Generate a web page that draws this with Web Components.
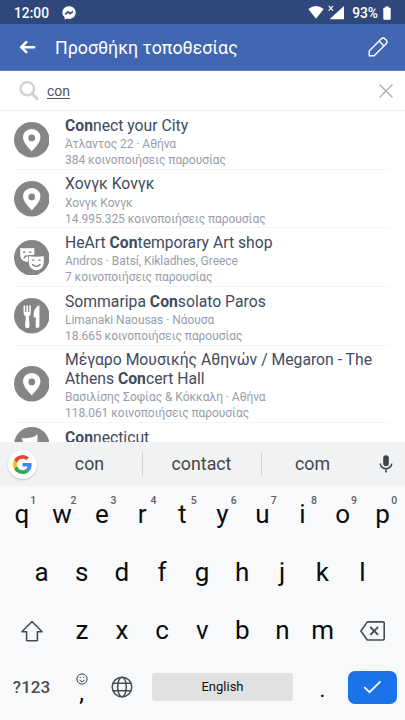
<!DOCTYPE html>
<html lang="el">
<head>
<meta charset="utf-8">
<title>Προσθήκη τοποθεσίας</title>
<style>
html,body{margin:0;height:100%;overflow:hidden;background:#fff}
body{font-family:Roboto,"Noto Sans",sans-serif}
</style>
</head>
<body>
<checkin-screen></checkin-screen>
<script>
const define = (name, html, setup) => {
  const tpl = document.createElement('template');
  tpl.innerHTML = html;
  customElements.define(name, class extends HTMLElement {
    constructor() {
      super();
      this.attachShadow({mode: 'open'}).append(tpl.content.cloneNode(true));
    }
    connectedCallback() { if (setup) setup(this, this.shadowRoot); }
  });
};

const glyphs = {
  pin: '<path fill="#fff" fill-rule="evenodd" d="M18 7.200c-5 0-8.800 3.700-8.800 8.300c0 5.400 5.200 9.900 8.800 14.500c3.600-4.600 8.800-9.100 8.800-14.500c0-4.600-3.800-8.300-8.800-8.300zM18 12.700a3.400 3.400 0 1 1 0 6.800a3.400 3.400 0 0 1 0-6.800z"/>',
  masks: '<path fill="#fff" d="M6.300 8q7.200.8 14.300 0v7.300h-6.400l.2 6.600q-1 .4-2.500.2q-5.600-1.500-5.600-6.800z"/><path fill="#fff" d="M15 16.600q7.600.8 15.200 0v7q-.8 6.800-7.500 7q-7-.2-7.700-7z"/><g fill="none" stroke="#777" stroke-width="1.300" stroke-linecap="round"><path d="M9.600 12.300h1.500M15.700 12.300h1.500M10.200 18.200q1.200-2.200 3-2M18.800 20.400h1.300M25.200 20.400h1.300M18.800 24.800q3.800 3.800 7.600 0"/></g>',
  food: '<path fill="#fff" d="M9.700 7.500h1.600v6.800h1.200V7.500h1.700v6.800h1.200V7.500H17v7.700q0 2.300-1.900 3.300l.7 10.200q-.2 2-2.300 2t-2.300-2l.7-10.200q-2.200-1-2.200-3.300zM25.800 7v21.500q0 2-2 2t-1.900-2l.3-8.600h-2.300q-.6-10.200 5.900-12.900z"/>',
  place: '<path fill="#fff" d="M7.500 11.200q9 .8 14.800-2V7.500h1.500v27h-1.500v-14H9.800q.2-5-2.300-9.300z"/>'
};

define('status-bar', `
<style>
:host{display:flex;align-items:center;height:24px;background:#2f477a;color:#fff;font:500 13.800px/24px Roboto,sans-serif;padding:1px 14px 0 14px;box-sizing:border-box}
.msg{margin-left:12.500px}
.end{margin-left:auto;display:flex;align-items:center}
.pct{margin:0 5px 0 7px;font-size:13.800px}
svg{display:block}
</style>
<span>12:00</span>
<svg class="msg" width="14" height="14" viewBox="0 0 14 14"><path fill="#fff" d="M7 .3C3.200.3.400 3 .400 6.600c0 2 .9 3.600 2.300 4.800v2.300l2.100-1.100c4.900 1.300 8.900-1.700 8.900-6C13.700 3 10.800.3 7 .3z"/><path fill="none" stroke="#2f477a" stroke-width="1.600" d="M3.200 8.400l2.800-2.600 2.100 1.900 2.800-2.400"/></svg>
<div class="end">
<svg width="16" height="13" viewBox="0 0 16 13"><path fill="#fff" d="M.3 2.900Q8-2.700 15.700 2.900L8 12.700z"/></svg>
<svg width="18" height="15" viewBox="0 0 18 15" style="margin-left:3px"><path fill="#fff" d="M17 1v13.300H2.500z"/><path stroke="#2f477a" stroke-width="3" d="M1 0l6.500 7"/><path stroke="#fff" stroke-width="1.100" d="M1.700.8l4.300 4.800M6 .8L1.700 5.600"/></svg>
<span class="pct">93%</span>
<svg width="8" height="14" viewBox="0 0 8 14"><path fill="#fff" d="M2.200.4h3.600v1.300h1q.9 0 .9.900v10.200q0 .9-.9.900H1.200q-.9 0-.9-.9V2.600q0-.9.900-.9h1z"/></svg>
</div>`);

define('app-bar', `
<style>
:host{display:flex;align-items:center;height:47px;background:#4267b2;border-bottom:1px solid #5e7cbd;box-sizing:border-box;color:#fff;padding:0 16px 0 19px}
h1{font:400 17.800px/24px Roboto,sans-serif;margin:2px 0 0 19px;flex:1;white-space:nowrap}
svg{display:block}
</style>
<svg width="17" height="16" viewBox="0 0 17 16" fill="none" stroke="#fff" stroke-width="2.500" stroke-linecap="round" stroke-linejoin="round"><path d="M15 8.200H3"/><path d="M7.300 3.200L2.200 8.200l5.100 5"/></svg>
<h1><slot></slot></h1>
<svg width="22" height="22" viewBox="0 0 22 22" fill="none" stroke="#fff" stroke-width="1.400" stroke-linejoin="round"><path d="M2.200 19.800V14.900L14.300 2.800q1.900-1.500 3.700.1l1.200 1.200q1.500 1.800 0 3.600L7.100 19.800zM12.100 5l4.900 4.900"/></svg>`);

define('search-field', `
<style>
:host{display:flex;align-items:center;height:40px;box-sizing:border-box;border-bottom:1px solid #ededee;padding:0 11px 0 19px;background:#fff}
span{flex:1;margin:1px 0 0 8px;font:400 14px/20px Roboto,sans-serif;color:#4b5567}
u{text-underline-offset:2px;text-decoration-thickness:1px}
svg{display:block}
</style>
<svg width="20" height="21" viewBox="0 0 20 21" fill="none" stroke="#ced1d6"><circle cx="8.300" cy="8.700" r="6.700" stroke-width="2.300"/><path stroke-width="3" stroke-linecap="round" d="M13.500 14l4.500 4.700"/></svg>
<span><u><slot></slot></u></span>
<svg width="16" height="16" viewBox="0 0 16 16" stroke="#a2a8b5" stroke-width="1.200"><path d="M1.500 1.500l13 13M14.500 1.500l-13 13"/></svg>`);

define('place-row', `
<style>
:host{display:flex;align-items:center;position:relative;box-sizing:border-box;padding:5.500px 13px 1.700px 13.500px;background:linear-gradient(#f5f6f7,#f5f6f7) 16px 100%/373px 1px no-repeat}
:host(:last-child){padding-top:6.500px}
svg{flex:none;display:block;width:35.500px;height:35.500px;margin-top:-4.200px}
.text{margin-left:16px;flex:1;min-width:0}
.title{font:400 15.730px/18.500px Roboto,sans-serif;color:#414b5e;margin-bottom:1px;white-space:nowrap}
::slotted(p){margin:0;font:400 12px/16px Roboto,sans-serif;letter-spacing:-.05px;color:#979dac;white-space:nowrap}
</style>
<svg viewBox="0 0 36 36"><circle cx="18" cy="18" r="18" fill="#858585"/><g></g></svg>
<div class="text"><div class="title"><slot name="title"></slot></div><slot></slot></div>`,
(el, root) => { root.querySelector('g').innerHTML = glyphs[el.getAttribute('icon')]; });

define('suggestion-bar', `
<style>
:host{display:flex;align-items:center;height:44px;background:#f0f2f3;box-sizing:border-box;padding:0 12.500px 0 8px}
.logo{width:29px;height:29px;border-radius:50%;background:#fff;box-shadow:0 1px 2px #0003;display:grid;place-items:center}
.words{flex:1;display:grid;grid-template-columns:105px 119px 103px;height:24px}
.words span{display:grid;place-items:center;font:400 17.800px/24px Roboto,sans-serif;color:#434749}
.words span+span{border-left:1px solid #cfd1d3;padding-right:1px}
svg{display:block}
</style>
<div class="logo"><svg width="19" height="19" viewBox="0 0 48 48"><path fill="#ea4335" d="M24 9.500c3.540 0 6.710 1.220 9.210 3.600l6.850-6.850C35.900 2.380 30.470 0 24 0 14.620 0 6.510 5.380 2.560 13.220l7.980 6.190C12.430 13.720 17.740 9.500 24 9.500z"/><path fill="#4285f4" d="M46.980 24.550c0-1.570-.15-3.090-.38-4.550H24v9.020h12.940c-.58 2.960-2.260 5.480-4.780 7.180l7.730 6c4.510-4.180 7.090-10.360 7.090-17.650z"/><path fill="#fbbc05" d="M10.530 28.590c-.48-1.450-.76-2.990-.76-4.590s.27-3.140.76-4.590l-7.980-6.190C.92 16.460 0 20.120 0 24c0 3.880.92 7.540 2.560 10.780z"/><path fill="#34a853" d="M24 48c6.480 0 11.930-2.130 15.890-5.810l-7.730-6c-2.150 1.450-4.920 2.300-8.160 2.300-6.260 0-11.570-4.220-13.470-9.910l-7.980 6.190C6.510 42.620 14.620 48 24 48z"/></svg></div>
<div class="words"><span>con</span><span>contact</span><span>com</span></div>
<svg width="14" height="18" viewBox="0 0 14 18"><rect x="4.200" y=".3" width="5.600" height="11" rx="2.800" fill="#404446"/><path fill="none" stroke="#404446" stroke-width="1.500" d="M1.300 8.500a5.700 5.200 0 0 0 11.400 0M7 13.500v4"/></svg>`);

define('letter-key', `
<style>
:host{display:grid;place-items:center;position:relative;width:40.100px;height:58px;font:400 26px/30px Roboto,sans-serif;color:#0b0c0d}
sup{position:absolute;left:31.500px;top:9px;font:500 10.500px/12px Roboto,sans-serif;color:#5c6063;transform:translateX(-50%)}
.cap{margin-top:-2px}
</style>
<span class="cap"><slot></slot></span>`,
(el, root) => {
  if (el.hasAttribute('hint')) {
    const s = document.createElement('sup');
    s.textContent = el.getAttribute('hint');
    root.append(s);
  }
});

define('key-board', `
<style>
:host{display:block;height:234px;background:#f8f9fb}
.row{display:flex;justify-content:center;height:58px;align-items:center}
.row.mid{padding-right:1px}
.first{padding-right:.5px}
.third{padding-right:.5px}
.fn{display:grid;place-items:center;width:60.300px;height:58px}
.bottom{display:grid;grid-template-columns:63px 37px 43px 9px 141px 55px 49px;justify-content:start;height:54px}
.bottom>*{justify-self:center}
.sym{font:500 17px/20px Roboto,sans-serif;color:#484c4f}
.comma{display:flex;flex-direction:column;align-items:center;font:400 24px/16px Roboto,sans-serif}
.space{width:141px;height:28px;border-radius:3px;background:#e0e2e1;display:grid;place-items:center;font:400 13px/16px Roboto,sans-serif;color:#111}
.dot{font:400 22px/26px Roboto,sans-serif;padding:5px 0 0 4px}
.enter{width:49px;height:33px;border-radius:7px;background:#1a73e8;display:grid;place-items:center}
svg{display:block}
</style>
<div class="row first"></div>
<div class="row mid"></div>
<div class="row third">
<div class="fn"><svg width="22" height="22" viewBox="0 0 22 22" fill="none" stroke="#484c4f" stroke-width="1.600" stroke-linejoin="round"><path d="M11 1.500L.9 11.700h4.700V20q0 .7.700.7h9.400q.7 0 .7-.7V11.700h4.700z"/></svg></div>
<div class="fn del"><svg width="25" height="20" viewBox="0 0 25 20" fill="none" stroke="#484c4f" stroke-width="1.600" stroke-linejoin="round"><path d="M7.300.9H23q1.200 0 1.200 1.200v15.700q0 1.200-1.200 1.200H7.300L.9 10z"/><path stroke-width="1.800" d="M10.300 6l7.800 7.800M18.100 6l-7.800 7.800"/></svg></div>
</div>
<div class="row bottom">
<span class="sym">?123</span>
<span class="comma"><svg width="12" height="12" viewBox="0 0 12 12" fill="none" stroke="#404446"><circle cx="6" cy="6" r="5.100"/><path d="M3.500 7.200q2.500 3 5 0M3.700 4.400h1.100M7.200 4.400h1.100"/></svg><span>,</span></span>
<svg width="22" height="22" viewBox="0 0 22 22" fill="none" stroke="#484c4f" stroke-width="1.500"><circle cx="11" cy="11" r="9.800"/><ellipse cx="11" cy="11" rx="4.300" ry="9.800"/><path d="M2 7.300h18M2 14.700h18"/></svg>
<i></i>
<span class="space">English</span>
<span class="dot">.</span>
<span class="enter"><svg width="19" height="14" viewBox="0 0 19 14" fill="none" stroke="#fff" stroke-width="1.700"><path d="M1.300 7.200l5.200 5L17.500 1.300"/></svg></span>
</div>`,
(el, root) => {
  const keys = (letters, hints) => [...letters].map((c, i) => {
    const k = document.createElement('letter-key');
    if (hints) k.setAttribute('hint', hints[i]);
    k.textContent = c;
    return k;
  });
  root.querySelector('.first').append(...keys('qwertyuiop', '1234567890'));
  root.querySelector('.mid').append(...keys('asdfghjkl'));
  root.querySelector('.del').before(...keys('zxcvbnm'));
});

define('checkin-screen', `
<style>
:host{display:flex;flex-direction:column;width:405px;height:720px;overflow:hidden;background:#fff}
.list{flex:1;min-height:0;overflow:hidden}
</style>
<status-bar></status-bar>
<app-bar>Προσθήκη τοποθεσίας</app-bar>
<search-field>con</search-field>
<div class="list">
<place-row icon="pin"><span slot="title"><b>Con</b>nect your City</span><p>Άτλαντος 22 · Αθήνα</p><p>384 κοινοποιήσεις παρουσίας</p></place-row>
<place-row icon="pin"><span slot="title">Χονγκ Κονγκ</span><p>Χονγκ Κονγκ</p><p>14.995.325 κοινοποιήσεις παρουσίας</p></place-row>
<place-row icon="masks"><span slot="title">HeArt <b>Con</b>temporary Art shop</span><p>Andros · Batsí, Kikladhes, Greece</p><p>7 κοινοποιήσεις παρουσίας</p></place-row>
<place-row icon="food"><span slot="title">Sommaripa <b>Con</b>solato Paros</span><p>Limanaki Naousas · Νάουσα</p><p>18.665 κοινοποιήσεις παρουσίας</p></place-row>
<place-row icon="pin"><span slot="title">Μέγαρο Μουσικής Αθηνών / Megaron - The<br>Athens <b>Con</b>cert Hall</span><p>Βασιλίσης Σοφίας &amp; Κόκκαλη · Αθήνα</p><p>118.061 κοινοποιήσεις παρουσίας</p></place-row>
<place-row icon="place"><span slot="title"><b>Con</b>necticut</span><p>&nbsp;</p></place-row>
</div>
<suggestion-bar></suggestion-bar>
<key-board></key-board>`);
</script>
</body>
</html>
